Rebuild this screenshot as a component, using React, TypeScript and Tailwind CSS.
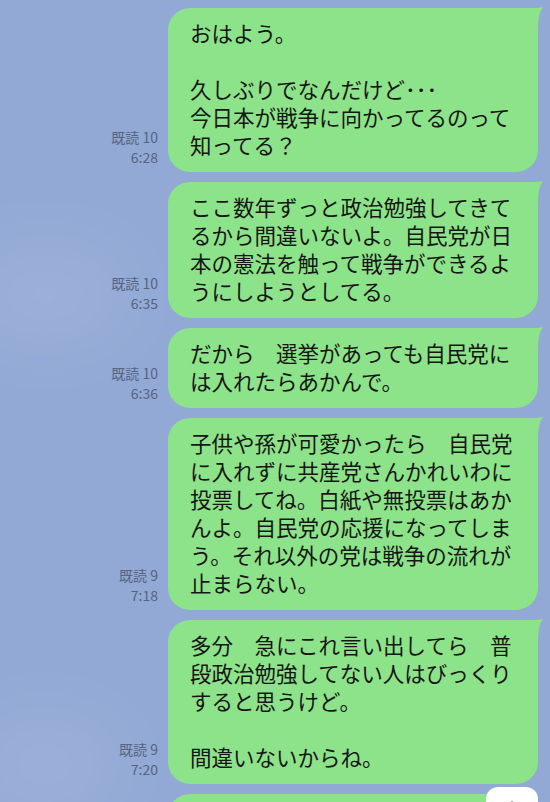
import { ArrowDown } from 'lucide-react';

type Message = {
  read: string;
  time: string;
  lines: string[];
};

const messages: Message[] = [
  {
    read: '既読 10',
    time: '6:28',
    lines: ['おはよう。', '', '久しぶりでなんだけど･･･', '今日本が戦争に向かってるのって', '知ってる？'],
  },
  {
    read: '既読 10',
    time: '6:35',
    lines: [
      'ここ数年ずっと政治勉強してきて',
      'るから間違いないよ。自民党が日',
      '本の憲法を触って戦争ができるよ',
      'うにしようとしてる。',
    ],
  },
  {
    read: '既読 10',
    time: '6:36',
    lines: ['だから　選挙があっても自民党に', 'は入れたらあかんで。'],
  },
  {
    read: '既読 9',
    time: '7:18',
    lines: [
      '子供や孫が可愛かったら　自民党',
      'に入れずに共産党さんかれいわに',
      '投票してね。白紙や無投票はあか',
      'んよ。自民党の応援になってしま',
      'う。それ以外の党は戦争の流れが',
      '止まらない。',
    ],
  },
  {
    read: '既読 9',
    time: '7:20',
    lines: [
      '多分　急にこれ言い出してら　普',
      '段政治勉強してない人はびっくり',
      'すると思うけど。',
      '',
      '間違いないからね。',
    ],
  },
];

const jp = "font-['Noto_Sans_CJK_JP','Noto_Sans',sans-serif]";

function Bubble({ lines }: { lines: string[] }) {
  return (
    <div className="relative">
      <div
        className={`w-[370px] rounded-[22px] rounded-tr-[4px] bg-[#8de38a] pl-[22px] pr-[16px] pt-[11px] pb-[13px] text-[21.5px] leading-[28px] text-[#161616] ${jp}`}
      >
        {lines.map((line, i) => (
          <div key={i} className="whitespace-pre h-[28px]">
            {line}
          </div>
        ))}
      </div>
      {/* tail */}
      <svg
        className="absolute -top-[1px] -right-[5px]"
        width="14"
        height="22"
        viewBox="0 0 14 22"
      >
        <path d="M0 1 L5 1 Q10 1 14 0 Q9 6 9 22 L0 22 Z" fill="#8de38a" />
      </svg>
    </div>
  );
}

export default function App() {
  return (
    <div className="relative w-full h-[802px] overflow-hidden bg-[#92a9d6]">
      {/* faint clouds in the wallpaper */}
      <div className="absolute left-[-40px] top-[250px] w-[170px] h-[90px] rounded-full bg-white/10 blur-2xl" />
      <div className="absolute left-[-30px] top-[720px] w-[150px] h-[90px] rounded-full bg-white/10 blur-2xl" />

      <div className="relative flex flex-col gap-[10px] pt-2 pr-3">
        {messages.map((m, i) => (
          <div key={i} className="flex justify-end items-end gap-[10px]">
            <div
              className={`mb-[5px] text-right text-[14px] leading-[20px] text-[#56647e] ${jp}`}
            >
              <div>{m.read}</div>
              <div>{m.time}</div>
            </div>
            <Bubble lines={m.lines} />
          </div>
        ))}
        <div className="flex justify-end">
          <div className="w-[370px] h-[60px] rounded-[22px] bg-[#8de38a]" />
        </div>
      </div>

      {/* scroll-to-bottom button */}
      <div className="absolute left-[486px] top-[787px] w-[52px] h-[44px] rounded-xl bg-white flex justify-center">
        <ArrowDown size={20} strokeWidth={2.2} className="mt-[11px] text-[#333]" />
      </div>
    </div>
  );
}
